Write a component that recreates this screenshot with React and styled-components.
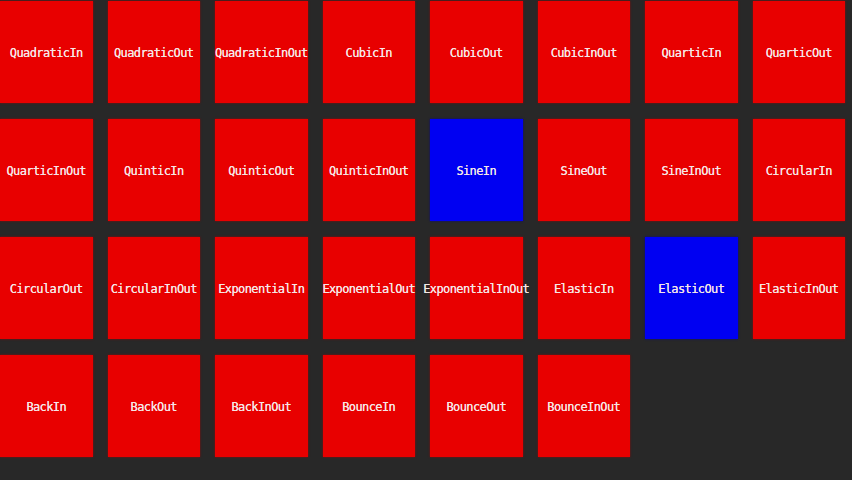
import React from 'react'
import styled, { createGlobalStyle } from 'styled-components'

const GlobalStyle = createGlobalStyle`
  html, body {
    margin: 0;
    padding: 0;
    background: #282828;
  }
  body {
    width: 852px;
    height: 480px;
    overflow: hidden;
  }
`

const Grid = styled.div`
  display: grid;
  grid-template-columns: repeat(8, 92.5px);
  grid-auto-rows: 102px;
  column-gap: 15px;
  row-gap: 16px;
  padding-top: 1px;
`

const Tile = styled.div`
  display: flex;
  align-items: center;
  justify-content: center;
  padding-top: 2px;
  box-sizing: border-box;
  background: ${(p) => (p.$active ? '#0000f2' : '#e80000')};
  box-shadow: 0 0 2px 0 ${(p) => (p.$active ? 'rgba(0,0,160,0.8)' : 'rgba(170,0,0,0.8)')};
  color: #f6e6e6;
  font-family: 'DejaVu Sans Mono', 'Liberation Mono', monospace;
  font-size: 12px;
  letter-spacing: -0.6px;
  text-shadow: 0 0 0.2px #f6e6e6;
  white-space: nowrap;
  overflow: visible;
`

const easings = [
  'QuadraticIn', 'QuadraticOut', 'QuadraticInOut', 'CubicIn', 'CubicOut', 'CubicInOut', 'QuarticIn', 'QuarticOut',
  'QuarticInOut', 'QuinticIn', 'QuinticOut', 'QuinticInOut', 'SineIn', 'SineOut', 'SineInOut', 'CircularIn',
  'CircularOut', 'CircularInOut', 'ExponentialIn', 'ExponentialOut', 'ExponentialInOut', 'ElasticIn', 'ElasticOut', 'ElasticInOut',
  'BackIn', 'BackOut', 'BackInOut', 'BounceIn', 'BounceOut', 'BounceInOut',
]

const active = ['SineIn', 'ElasticOut']

const App = () => (
  <>
    <GlobalStyle />
    <Grid>
      {easings.map((name) => (
        <Tile key={name} $active={active.includes(name)}>
          {name}
        </Tile>
      ))}
    </Grid>
  </>
)

export default App
